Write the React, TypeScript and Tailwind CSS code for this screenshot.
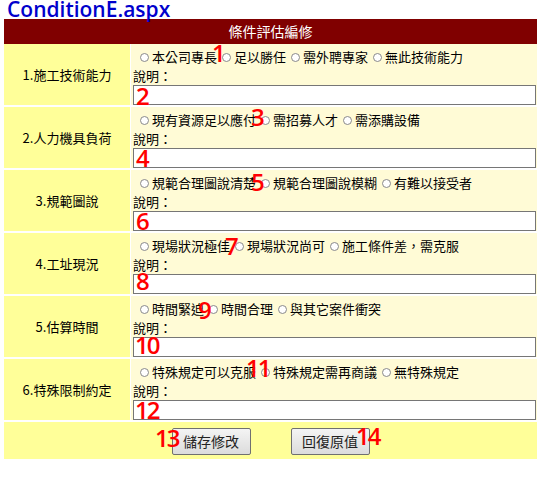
import React from 'react';

const ROWS = [
  { label: '1.施工技術能力', options: ['本公司專長', '足以勝任', '需外聘專家', '無此技術能力'] },
  { label: '2.人力機具負荷', options: ['現有資源足以應付', '需招募人才', '需添購設備'] },
  { label: '3.規範圖說', options: ['規範合理圖說清楚', '規範合理圖說模糊', '有難以接受者'] },
  { label: '4.工址現況', options: ['現場狀況極佳', '現場狀況尚可', '施工條件差，需克服'] },
  { label: '5.估算時間', options: ['時間緊迫', '時間合理', '與其它案件衝突'] },
  { label: '6.特殊限制約定', options: ['特殊規定可以克服', '特殊規定需再商議', '無特殊規定'] },
];

// red callout numbers laid over the form
const MARKS = [
  { n: '1', x: 212, y: 41 },
  { n: '2', x: 136, y: 84 },
  { n: '3', x: 251, y: 105 },
  { n: '4', x: 136, y: 146 },
  { n: '5', x: 251, y: 170 },
  { n: '6', x: 136, y: 209 },
  { n: '7', x: 225, y: 234 },
  { n: '8', x: 136, y: 269 },
  { n: '9', x: 198, y: 298 },
  { n: '10', x: 135, y: 333 },
  { n: '11', x: 246, y: 356 },
  { n: '12', x: 135, y: 398 },
  { n: '13', x: 155, y: 426 },
  { n: '14', x: 356, y: 424 },
];

const cjk = "font-['Noto_Sans_CJK_TC','Noto_Sans',sans-serif]";

const Radio = ({ text }: { text: string }) => (
  <span className="inline-flex items-center mr-[5px]">
    <span className="w-[9px] h-[9px] rounded-full border border-[#8a8a8a] bg-white mr-[3px] shrink-0" />
    {text}
  </span>
);

const Button = ({ children }: { children: React.ReactNode }) => (
  <button className="w-[79px] h-[27px] text-[14px] text-[#222] border border-[#707070] rounded-[2px] bg-gradient-to-b from-[#f4f4f4] to-[#dcdcdc] flex items-center justify-center">
    {children}
  </button>
);

export default function App() {
  return (
    <div className={`relative w-[542px] h-[478px] bg-white text-black ${cjk}`}>
      <div className="h-[19px] pl-[7px] font-['Open_Sans',sans-serif] font-semibold text-[21px] leading-[19px] text-[#0000cc]">
        ConditionE.aspx
      </div>

      <div className="ml-[4px] w-[533px]">
        <div className="h-[25px] bg-[#800000] text-white text-[14px] flex items-center justify-center">
          條件評估編修
        </div>
        <div className="flex flex-col gap-[2px]">
          {ROWS.map(row => (
            <div key={row.label} className="flex h-[61px] gap-[1px]">
              <div className="w-[126px] bg-[#ffff99] text-[13px] flex items-center justify-center">
                {row.label}
              </div>
              <div className="flex-1 bg-[#fffbd6] flex flex-col pt-[5px] text-[13px]">
                <div className="h-[16px] pl-[9px] flex items-center whitespace-nowrap">
                  {row.options.map(o => <Radio key={o} text={o} />)}
                </div>
                <div className="h-[19px] pl-[2px] flex items-end leading-[16px]">說明：</div>
                <div className="h-[20px] mt-[1px] ml-[2px] mr-[1px] border border-[#767676] bg-white" />
              </div>
            </div>
          ))}
          <div className="h-[37px] bg-[#ffff99] flex justify-center items-start pt-[6px] gap-[40px]">
            <Button>儲存修改</Button>
            <Button>回復原值</Button>
          </div>
        </div>
      </div>

      {MARKS.map(m => (
        <span
          key={m.n}
          className="absolute font-['Open_Sans',sans-serif] font-semibold text-[24px] leading-[24px] text-[#ff0000] tracking-[-2px]"
          style={{ left: m.x, top: m.y }}
        >
          {m.n}
        </span>
      ))}
    </div>
  );
}
